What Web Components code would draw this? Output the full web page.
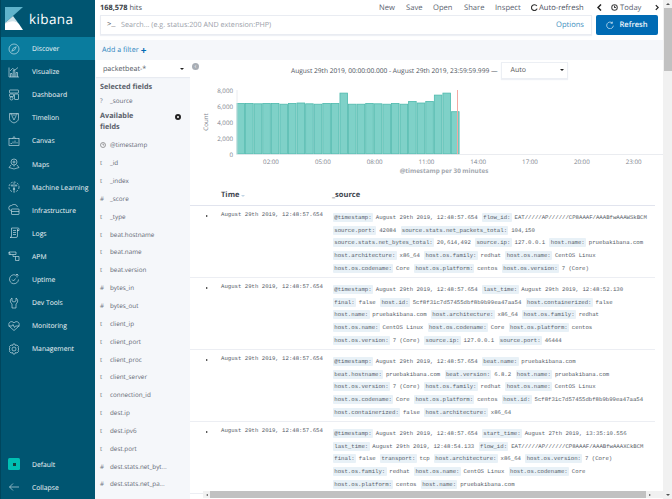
<!DOCTYPE html>
<html>
<head>
<meta charset="utf-8">
<title>Kibana</title>
<style>
    html, body { margin: 0; padding: 0; height: 100%; overflow: hidden; background: #fff; }
    body { font-family: "Open Sans", "Liberation Sans", sans-serif; text-rendering: geometricPrecision; }
</style>
</head>
<body>
<kbn-app></kbn-app>
<script>
const ICONS = {
    discover: '<circle cx="12" cy="12" r="10"/><path d="M16.5 7.5l-6 3-3 6 6-3z"/>',
    visualize: '<path d="M2 3v19h20M5 22v-7h3v7M10.500 22V9h3v13M16 22v-9h3v9M4 10l5-5 5 3 6-5"/>',
    dashboard: '<rect x="3" y="2" width="18" height="6" rx="1"/><rect x="3" y="10" width="8" height="5" rx="1"/><rect x="13" y="10" width="8" height="11" rx="1"/><circle cx="7" cy="19" r="3"/>',
    timelion: '<path d="M3 3h18v10c0 5-4 7-9 9-5-2-9-4-9-9z"/><path d="M8 8l4 8 4-8M6 3v3h12V3"/>',
    canvas: '<rect x="2" y="7" width="20" height="14"/><path d="M9 7l3-4 3 4M5 17h3M10 17v-4M14 17v-6M18 17v-3"/>',
    maps: '<circle cx="12" cy="8" r="6"/><circle cx="12" cy="8" r="2"/><path d="M12 14v3M6 14l-4 5 10 3 10-3-4-5"/>',
    ml: '<circle cx="12" cy="12" r="10" stroke-dasharray="4 2.500"/><circle cx="8" cy="9" r="1.500"/><circle cx="16" cy="9" r="1.500"/><circle cx="12" cy="16" r="1.500"/><path d="M12 3v18"/>',
    infra: '<path d="M6 13a5 5 0 0 1 1-10 7 7 0 0 1 12 3"/><rect x="7" y="10" width="15" height="11" rx="1"/><path d="M7 15h15"/>',
    logs: '<path d="M7 2h13a2 2 0 0 1 2 2v3h-4M7 2v16a3 3 0 0 1-3 3h12a3 3 0 0 0 3-3V4M10 7h6M10 11h6M10 15h6"/>',
    apm: '<path d="M2 4h14v5H2zM10 9v4h12v8h-7v-8"/><path d="M2 4l3 5"/>',
    uptime: '<path d="M15 4a9 9 0 1 0 6 9M18 9V2M15 5l3-3 3 3M8 13l3 3 4-5"/>',
    dev: '<path d="M8 2v6l4 2 4-2V2c3 2 4 5 3 8-1 2-2 3-3 4v8H8v-8c-1-1-2-2-3-4-1-3 0-6 3-8z"/>',
    monitoring: '<path d="M12 21l-8-7C1 11 1 7 3 5c3-3 7-2 9 1 2-3 6-4 9-1 2 2 2 6-1 9z"/><path d="M1 12h7l2-3 3 6 2-3h8"/>',
    management: '<circle cx="12" cy="12" r="4"/><path d="M10 2h4l1 3 3-1 3 3-1 3 2 2-2 2 1 3-3 3-3-1-1 3h-4l-1-3-3 1-3-3 1-3-2-2 2-2-1-3 3-3 3 1z"/>',
    collapse: '<path d="M22 12H3M10 5l-7 7 7 7"/>'
};

class KbnApp extends HTMLElement {
    constructor() {
        super();
        this.root = this.attachShadow({ mode: 'open' });
        this.root.innerHTML = `
            <style>
                :host { display: flex; width: 672px; height: 499px; overflow: hidden; }
                .main { flex: 1; min-width: 0; display: flex; flex-direction: column; }
                .body { flex: 1; min-height: 0; display: flex; }
                .content { flex: 1; min-width: 0; display: flex; flex-direction: column; position: relative; }
            </style>
            <kbn-sidebar></kbn-sidebar>
            <div class="main">
                <kbn-topbar></kbn-topbar>
                <kbn-filterbar></kbn-filterbar>
                <div class="body">
                    <kbn-fields></kbn-fields>
                    <div class="content">
                        <kbn-chart></kbn-chart>
                        <kbn-doc-table></kbn-doc-table>
                        <kbn-hscroll></kbn-hscroll>
                    </div>
                </div>
            </div>
            <kbn-vscroll></kbn-vscroll>
        `;
    }
}

class KbnSidebar extends HTMLElement {
    constructor() {
        super();
        this.root = this.attachShadow({ mode: 'open' });
        const items = [
            ['discover', 'Discover', true], ['visualize', 'Visualize'], ['dashboard', 'Dashboard'],
            ['timelion', 'Timelion'], ['canvas', 'Canvas'], ['maps', 'Maps'], ['ml', 'Machine Learning'],
            ['infra', 'Infrastructure'], ['logs', 'Logs'], ['apm', 'APM'], ['uptime', 'Uptime'],
            ['dev', 'Dev Tools'], ['monitoring', 'Monitoring'], ['management', 'Management']
        ];
        this.root.innerHTML = `
            <style>
                :host { display: flex; flex-direction: column; width: 95px; flex: none; height: 499px; background: #005571; border-left: 1px solid #00465d; box-sizing: border-box; }
                .logo { height: 37px; flex: none; display: flex; align-items: center; gap: 6px; padding-left: 4px; color: #fff; font-size: 13.5px; letter-spacing: .4px; }
                .logo svg { width: 18px; height: 23px; }
                .nav { flex: 1; }
                .foot { flex: none; }
            </style>
            <div class="logo">
                <svg viewBox="0 0 18 23"><path fill="#5fb3cb" d="M0 0h18L0 16z"/><path fill="#fff" d="M18 23H0v-7c5-3 10-4 14 1z"/><path fill="#cfe3ea" d="M0 16L8 9l6 8c-4-4-9-3-14 0z"/></svg>
                <span>kibana</span>
            </div>
            <div class="nav">
                ${items.map(([icon, label, active]) => `<kbn-nav-item icon="${icon}" ${active ? 'active' : ''}>${label}</kbn-nav-item>`).join('')}
            </div>
            <div class="foot">
                <kbn-nav-item icon="space">Default</kbn-nav-item>
                <kbn-nav-item icon="collapse">Collapse</kbn-nav-item>
            </div>
        `;
    }
}

class KbnNavItem extends HTMLElement {
    constructor() {
        super();
        this.root = this.attachShadow({ mode: 'open' });
    }

    connectedCallback() {
        const icon = this.getAttribute('icon');
        const glyph = icon === 'space'
            ? '<span class="space"><i></i></span>'
            : `<svg viewBox="0 0 24 24">${ICONS[icon]}</svg>`;
        this.root.innerHTML = `
            <style>
                :host { display: flex; align-items: center; height: 23.1px; color: #f2f7f9; font-size: 6.8px; white-space: nowrap; }
                :host([active]) { background: #0a7c9e; }
                .icon { width: 31px; flex: none; display: flex; justify-content: center; box-sizing: border-box; padding-right: 5px; }
                svg { width: 12px; height: 12px; fill: none; stroke: #dfecf1; stroke-width: 1.2; }
                .space { width: 12px; height: 12px; background: #00bfb3; border-radius: 1.500px; display: flex; align-items: center; justify-content: center; }
                .space i { width: 3px; height: 3.500px; background: #12413f; }
            </style>
            <span class="icon">${glyph}</span><slot></slot>
        `;
    }
}

class KbnTopbar extends HTMLElement {
    constructor() {
        super();
        this.root = this.attachShadow({ mode: 'open' });
        this.root.innerHTML = `
            <style>
                :host { display: block; height: 40px; flex: none; font-size: 7.6px; color: #5a6270; box-sizing: border-box; padding: 0 5px; }
                .row1 { display: flex; align-items: center; height: 15px; }
                .hits { color: #4c525c; flex: 1; font-size: 7.400px; }
                .hits b { color: #3a3f47; font-weight: 700; }
                .links { display: flex; align-items: center; margin-right: -1px; }
                .links span { display: flex; align-items: center; }
                .row2 { display: flex; gap: 4px; height: 20px; }
                .search { flex: 1; display: flex; align-items: center; background: #fff; border: 1px solid #e9ecf2; box-shadow: 0 1px 1px #eef0f5; box-sizing: border-box; padding: 0 7px 0 6px; color: #9aa0a9; font-size: 7.2px; }
                .prompt { color: #555; width: 14px; font-family: "Liberation Mono", monospace; font-size: 7px; }
                .search .ph { flex: 1; }
                .options { color: #3f90c0; font-size: 7.6px; }
                .refresh { width: 62px; flex: none; background: #006bb4; color: #eef6fb; border-radius: 2px; display: flex; align-items: center; justify-content: center; gap: 5px; font-weight: 600; font-size: 7.600px; }
                svg { fill: none; }
            </style>
            <div class="row1">
                <span class="hits"><b>168,578</b> hits</span>
                <span class="links">
                    <span style="width:27px">New</span>
                    <span style="width:27px">Save</span>
                    <span style="width:31px">Open</span>
                    <span style="width:31px">Share</span>
                    <span style="width:36px">Inspect</span>
                    <span style="width:66px;gap:1px;color:#4a5060"><svg width="7" height="7" viewBox="0 0 24 24" stroke="#333" stroke-width="4"><path d="M20 7a10 10 0 1 0 1 9"/></svg>Auto-refresh</span>
                    <span style="width:14px;color:#222"><svg width="5" height="7" viewBox="0 0 10 14" stroke="#222" stroke-width="3"><path d="M8 1L2 7l6 6"/></svg></span>
                    <span style="width:44px;gap:2px"><svg width="7" height="7" viewBox="0 0 24 24" stroke="#444" stroke-width="3.500"><circle cx="12" cy="12" r="9.500"/><path d="M12 6v6h5"/></svg>Today</span>
                    <span style="width:4px"><svg width="5" height="7" viewBox="0 0 10 14" stroke="#222" stroke-width="3"><path d="M2 1l6 6-6 6"/></svg></span>
                </span>
            </div>
            <div class="row2">
                <div class="search"><span class="prompt">&gt;_</span><span class="ph">Search... (e.g. status:200 AND extension:PHP)</span><span class="options">Options</span></div>
                <div class="refresh"><svg width="8" height="8" viewBox="0 0 24 24" stroke="#eaf4fb" stroke-width="2"><path d="M19 6a10 10 0 1 0 3 8M19 2v5h-5"/></svg>Refresh</div>
            </div>
        `;
    }
}

class KbnFilterbar extends HTMLElement {
    constructor() {
        super();
        this.root = this.attachShadow({ mode: 'open' });
        this.root.innerHTML = `
            <style>
                :host { display: flex; align-items: center; height: 20px; flex: none; background: #f5f7fa; padding-left: 7px; color: #2f86bf; font-size: 7.2px; gap: 2px; }
                b { color: #006bb4; font-size: 10px; line-height: 1; font-weight: 700; }
            </style>
            Add a filter <b>+</b>
        `;
    }
}

class KbnFields extends HTMLElement {
    constructor() {
        super();
        this.root = this.attachShadow({ mode: 'open' });
        const fields = [
            ['clock', '@timestamp'], ['t', '_id'], ['t', '_index'], ['#', '_score'], ['t', '_type'],
            ['t', 'beat.hostname'], ['t', 'beat.name'], ['t', 'beat.version'], ['#', 'bytes_in'], ['#', 'bytes_out'],
            ['t', 'client_ip'], ['t', 'client_port'], ['t', 'client_proc'], ['t', 'client_server'], ['t', 'connection_id'],
            ['t', 'dest.ip'], ['t', 'dest.ipv6'], ['t', 'dest.port'], ['#', 'dest.stats.net_byt...'], ['#', 'dest.stats.net_pa...'],
            ['t', 'direction']
        ];
        this.root.innerHTML = `
            <style>
                :host { display: flex; flex-direction: column; width: 95px; flex: none; background: #f5f7fa; overflow: hidden; }
                .select { height: 17px; flex: none; background: #fff; display: flex; align-items: center; justify-content: space-between; padding: 0 6px 0 7px; margin-left: 1px; font-size: 7.150px; color: #555c66; box-shadow: 0 1px 1px #e8ebf1; }
                .caret { width: 0; height: 0; border: 2px solid transparent; border-top: 2.500px solid #222; border-bottom: 0; }
                h3 { margin: 0; padding: 0 5px; font-size: 7.250px; font-weight: 700; color: #5a616b; line-height: 11px; position: relative; }
                .selected { margin-top: 5px; }
                .avail { margin-top: 4px; width: 42px; }
                .gear { position: absolute; left: 80px; top: 2.500px; width: 6px; height: 6px; border-radius: 50%; border: 2px solid #222; background: #fff; box-sizing: border-box; }
                .gap { height: 3px; flex: none; }
            </style>
            <div class="select">packetbeat-*<span class="caret"></span></div>
            <h3 class="selected">Selected fields</h3>
            <kbn-field type="?" style="height:14px">_source</kbn-field>
            <h3 class="avail">Available fields<span class="gear"></span></h3>
            <div class="gap"></div>
            ${fields.map(([type, name]) => `<kbn-field type="${type}">${name}</kbn-field>`).join('')}
        `;
    }
}

class KbnField extends HTMLElement {
    constructor() {
        super();
        this.root = this.attachShadow({ mode: 'open' });
    }

    connectedCallback() {
        const type = this.getAttribute('type');
        const glyph = type === 'clock'
            ? '<svg width="6" height="6" viewBox="0 0 24 24" fill="none" stroke="#666" stroke-width="2.500"><circle cx="12" cy="12" r="10"/><path d="M12 6v6h5"/></svg>'
            : type;
        this.root.innerHTML = `
            <style>
                :host { display: flex; align-items: center; height: 17.85px; flex: none; padding-left: 4px; font-size: 6.300px; color: #5f6672; white-space: nowrap; }
                .type { width: 11px; flex: none; font-size: 6.200px; color: #6d7480; display: flex; padding-left: 1px; box-sizing: border-box; }
            </style>
            <span class="type">${glyph}</span><slot></slot>
        `;
    }
}

class KbnChart extends HTMLElement {
    constructor() {
        super();
        this.root = this.attachShadow({ mode: 'open' });
        const values = [6400, 6400, 6350, 6400, 6400, 6300, 6400, 6450, 6350, 6300, 6400, 6400, 7700, 6300, 6300, 6400, 6350, 6300, 6400, 6300, 6650, 6450, 6650, 7450, 7700, 5350];
        const base = 94, top = 30.7, step = 8.58, x0 = 47;
        const h = v => v / 8000 * (base - top);
        const bars = values.map((v, i) => `<rect x="${(x0 + i * step).toFixed(2)}" y="${(base - h(v)).toFixed(1)}" width="${step - 1}" height="${h(v).toFixed(1)}" fill="#7fd1c8" stroke="#4fb9ad" stroke-width=".8"/>`).join('');
        const yTicks = [0, 2000, 4000, 6000, 8000].map(v => `<text x="43" y="${base - h(v) + 2.500}" text-anchor="end">${v.toLocaleString('en-US')}</text>`).join('');
        const xTicks = ['02:00', '05:00', '08:00', '11:00', '14:00', '17:00', '20:00', '23:00'].map((t, i) => `<text x="${81 + i * 51.8}" y="104" text-anchor="middle">${t}</text>`).join('');
        this.root.innerHTML = `
            <style>
                :host { display: block; height: 125px; flex: none; position: relative; font-size: 6.600px; color: #4c525c; }
                .range { height: 20px; display: flex; align-items: center; padding-left: 101px; white-space: nowrap; }
                .auto { margin-left: 3px; width: 67px; height: 17px; box-sizing: border-box; background: #fff; border: 1px solid #eceff4; box-shadow: 0 1px 1px #eef0f5; display: flex; align-items: center; justify-content: space-between; padding: 0 3px 0 9px; color: #555; flex: none; font-size: 7px; }
                .caret { width: 0; height: 0; border: 2px solid transparent; border-top: 2.500px solid #222; border-bottom: 0; }
                .back { position: absolute; left: 2px; top: 3px; width: 7px; height: 7px; border-radius: 50%; background: #a9aeb5; color: #fff; font-size: 6px; line-height: 7px; text-align: center; }
                svg { display: block; position: absolute; left: 0; top: 0; font-family: "Open Sans", sans-serif; font-size: 6.200px; fill: #7c828c; }
            </style>
            <span class="back">&#8249;</span>
            <div class="range">August 29th 2019, 00:00:00.000 - August 29th 2019, 23:59:59.999 &#8212;<span class="auto">Auto<span class="caret"></span></span></div>
            <svg width="473" height="125" viewBox="0 0 473 125">
                ${bars}
                <path d="M47 30v64.500h428" fill="none" stroke="#e4e7ec" stroke-width=".8"/>
                <path d="M267.500 30v64" stroke="#f4a9a2" stroke-width="1"/>
                ${yTicks}${xTicks}
                <text x="18" y="62" text-anchor="middle" transform="rotate(-90 18 62)">Count</text>
                <text x="254" y="113" text-anchor="middle" style="font-size:6.300px;font-weight:700;fill:#a2a7ae">@timestamp per 30 minutes</text>
            </svg>
        `;
    }
}

class KbnDocTable extends HTMLElement {
    constructor() {
        super();
        this.root = this.attachShadow({ mode: 'open' });
        const time = 'August 29th 2019, 12:48:57.654';
        const docs = [
            [
                [['@timestamp', 'August 29th 2019, 12:48:57.654'], ['flow_id', 'EAT/////AP//////CP8AAAF/AAABfwAAAWSkBCM']],
                [['source.port', '42084'], ['source.stats.net_packets_total', '104,150']],
                [['source.stats.net_bytes_total', '20,614,492'], ['source.ip', '127.0.0.1'], ['host.name', 'pruebakibana.com']],
                [['host.architecture', 'x86_64'], ['host.os.family', 'redhat'], ['host.os.name', 'CentOS Linux']],
                [['host.os.codename', 'Core'], ['host.os.platform', 'centos'], ['host.os.version', '7 (Core)']]
            ],
            [
                [['@timestamp', 'August 29th 2019, 12:48:57.654'], ['last_time', 'August 29th 2019, 12:48:52.130']],
                [['final', 'false'], ['host.id', '5cf8f31c7d57455dbf8b9b99ea47aa54'], ['host.containerized', 'false']],
                [['host.name', 'pruebakibana.com'], ['host.architecture', 'x86_64'], ['host.os.family', 'redhat']],
                [['host.os.name', 'CentOS Linux'], ['host.os.codename', 'Core'], ['host.os.platform', 'centos']],
                [['host.os.version', '7 (Core)'], ['source.ip', '127.0.0.1'], ['source.port', '46444']]
            ],
            [
                [['@timestamp', 'August 29th 2019, 12:48:57.654'], ['beat.name', 'pruebakibana.com']],
                [['beat.hostname', 'pruebakibana.com'], ['beat.version', '6.8.2'], ['host.name', 'pruebakibana.com']],
                [['host.os.version', '7 (Core)'], ['host.os.family', 'redhat'], ['host.os.name', 'CentOS Linux']],
                [['host.os.codename', 'Core'], ['host.os.platform', 'centos'], ['host.id', '5cf8f31c7d57455dbf8b9b99ea47aa54']],
                [['host.containerized', 'false'], ['host.architecture', 'x86_64']]
            ],
            [
                [['@timestamp', 'August 29th 2019, 12:48:57.654'], ['start_time', 'August 27th 2019, 13:35:10.556']],
                [['last_time', 'August 29th 2019, 12:48:54.133'], ['flow_id', 'EAT/////AP//////CP8AAAF/AAABfwAAAXCkBCM']],
                [['final', 'false'], ['transport', 'tcp'], ['host.architecture', 'x86_64'], ['host.os.version', '7 (Core)']],
                [['host.os.family', 'redhat'], ['host.os.name', 'CentOS Linux'], ['host.os.codename', 'Core']],
                [['host.os.platform', 'centos'], ['host.name', 'pruebakibana.com']]
            ]
        ];
        this.root.innerHTML = `
            <style>
                :host { display: block; flex: 1; min-height: 0; overflow: hidden; padding-right: 8px; }
                .head { display: flex; align-items: center; height: 20px; border-bottom: 1px solid #e1e4ee; font-size: 7.500px; font-weight: 700; color: #3f4650; }
                .time { width: 111px; padding-left: 31px; display: flex; align-items: center; gap: 2px; }
                .sort { width: 0; height: 0; border: 2px solid transparent; border-top: 2px solid #c2d6e6; border-bottom: 0; margin-top: 2px; }
            </style>
            <div class="head"><span class="time">Time<span class="sort"></span></span><span>_source</span></div>
            ${docs.map(lines => `<kbn-doc-row time="${time}">${lines.map(line =>
                `<div slot="line" style="display:flex;height:12.7px;align-items:center;white-space:nowrap">${line.map(([k, v]) =>
                    `<kbn-kv name="${k}">${v}</kbn-kv>`).join('')}</div>`).join('')}</kbn-doc-row>`).join('')}
        `;
    }
}

class KbnDocRow extends HTMLElement {
    constructor() {
        super();
        this.root = this.attachShadow({ mode: 'open' });
    }

    connectedCallback() {
        this.root.innerHTML = `
            <style>
                :host { display: flex; height: 71px; border-bottom: 1px solid #eceef3; font-family: "Liberation Mono", monospace; font-size: 5.670px; color: #555b66; }
                .toggle { width: 8px; margin-left: 16px; flex: none; padding-top: 9px; box-sizing: border-box; }
                .toggle i { display: block; width: 0; height: 0; border: 1.500px solid transparent; border-left: 2.500px solid #222; border-right: 0; }
                .time { width: 120px; flex: none; padding-top: 4px; padding-left: 7px; box-sizing: border-box; line-height: 10px; }
                .src { flex: 1; min-width: 0; overflow: hidden; padding-top: 5px; margin-left: -1px; margin-right: 5px; box-sizing: border-box; }
            </style>
            <div class="toggle"><i></i></div>
            <div class="time">${this.getAttribute('time')}</div>
            <div class="src"><slot name="line"></slot></div>
        `;
    }
}

class KbnKv extends HTMLElement {
    constructor() {
        super();
        this.root = this.attachShadow({ mode: 'open' });
    }

    connectedCallback() {
        this.root.innerHTML = `
            <style>
                :host { display: inline-flex; align-items: center; flex: none; margin-right: 4.400px; }
                b { font-weight: 400; background: #e8f1f7; border-radius: 1px; padding: 1px 1.300px; margin-right: 2.800px; color: #565d69; }
            </style>
            <b>${this.getAttribute('name')}:</b><slot></slot>
        `;
    }
}

class KbnHscroll extends HTMLElement {
    constructor() {
        super();
        this.root = this.attachShadow({ mode: 'open' });
        this.root.innerHTML = `
            <style>
                :host { position: absolute; left: 13px; right: 0; bottom: 1px; height: 7px; background: #f1f1f1; display: flex; align-items: center; }
                .arrow { width: 7px; flex: none; display: flex; justify-content: center; }
                .arrow i { width: 0; height: 0; border: 1.500px solid transparent; }
                .l i { border-right: 2px solid #555; border-left: 0; }
                .r i { border-left: 2px solid #555; border-right: 0; }
                .thumb { width: 436px; height: 7px; background: #c1c1c1; flex: none; }
            </style>
            <span class="arrow l"><i></i></span><span class="thumb"></span><span class="arrow r"><i></i></span>
        `;
    }
}

class KbnVscroll extends HTMLElement {
    constructor() {
        super();
        this.root = this.attachShadow({ mode: 'open' });
        this.root.innerHTML = `
            <style>
                :host { display: flex; flex-direction: column; width: 9px; flex: none; height: 499px; background: #f1f1f1; }
                .arrow { height: 8px; flex: none; display: flex; justify-content: center; align-items: center; }
                .arrow i { width: 0; height: 0; border: 2px solid transparent; }
                .u i { border-bottom: 2px solid #555; border-top: 0; }
                .d i { border-top: 2px solid #555; border-bottom: 0; }
                .thumb { height: 63px; margin-left: 1px; background: #c1c1c1; flex: none; }
                .rest { flex: 1; }
            </style>
            <span class="arrow u"><i></i></span><span class="thumb"></span><span class="rest"></span><span class="arrow d"><i></i></span>
        `;
    }
}

customElements.define('kbn-app', KbnApp);
customElements.define('kbn-sidebar', KbnSidebar);
customElements.define('kbn-nav-item', KbnNavItem);
customElements.define('kbn-topbar', KbnTopbar);
customElements.define('kbn-filterbar', KbnFilterbar);
customElements.define('kbn-fields', KbnFields);
customElements.define('kbn-field', KbnField);
customElements.define('kbn-chart', KbnChart);
customElements.define('kbn-doc-table', KbnDocTable);
customElements.define('kbn-doc-row', KbnDocRow);
customElements.define('kbn-kv', KbnKv);
customElements.define('kbn-hscroll', KbnHscroll);
customElements.define('kbn-vscroll', KbnVscroll);
</script>
</body>
</html>
